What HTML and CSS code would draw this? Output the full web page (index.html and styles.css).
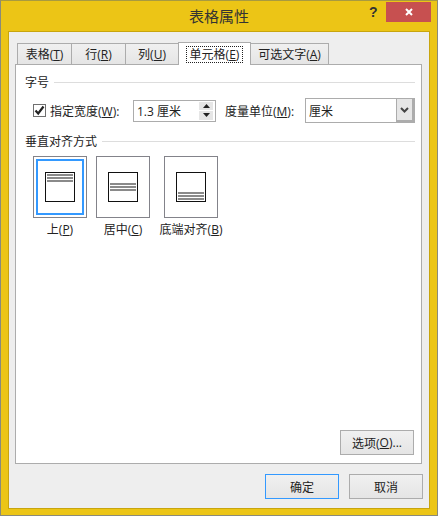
FILE: index.html
```html
<html>

<head>
    <title>表格属性</title>
    <link rel="stylesheet" href="styles.css">
</head>

<body>
    <div class="window">
        <div class="titlebar">
            <div class="title">表格属性</div>
            <div class="help">?</div>
            <div class="close">
                <svg width="10" height="10" viewBox="0 0 10 10">
                    <path d="M2 2 L8 8 M8 2 L2 8" stroke="#fff" stroke-width="2" fill="none" />
                </svg>
            </div>
        </div>
        <div class="client">
            <div class="tabs">
                <div class="tab tab-table">表格(<u>T</u>)</div>
                <div class="tab tab-row">行(<u>R</u>)</div>
                <div class="tab tab-col">列(<u>U</u>)</div>
                <div class="tab tab-active"><span class="focus">单元格(<u>E</u>)</span></div>
                <div class="tab tab-alt">可选文字(<u>A</u>)</div>
            </div>
            <div class="panel">
                <div class="group">
                    <span>字号</span>
                    <div class="rule"></div>
                </div>
                <div class="size-row">
                    <div class="check">
                        <svg width="11" height="11" viewBox="0 0 11 11">
                            <path d="M1.5 5.5 L4.2 8.5 L9.5 1.5" stroke="#222" stroke-width="2.2" fill="none" />
                        </svg>
                    </div>
                    <label class="width-label">指定宽度(<u>W</u>):</label>
                    <div class="spin">
                        <span class="spin-value">1.3 厘米</span>
                        <div class="spin-btns">
                            <div class="spin-btn">
                                <svg width="7" height="4" viewBox="0 0 7 4"><path d="M3.5 0 L7 4 L0 4 Z" fill="#222" /></svg>
                            </div>
                            <div class="spin-btn">
                                <svg width="7" height="4" viewBox="0 0 7 4"><path d="M0 0 L7 0 L3.5 4 Z" fill="#222" /></svg>
                            </div>
                        </div>
                    </div>
                    <label class="unit-label">度量单位(<u>M</u>):</label>
                    <div class="combo">
                        <span class="combo-value">厘米</span>
                        <div class="combo-btn">
                            <svg width="9" height="6" viewBox="0 0 9 6">
                                <path d="M1 1 L4.5 4.5 L8 1" stroke="#444" stroke-width="2" fill="none" />
                            </svg>
                        </div>
                    </div>
                </div>
                <div class="group group-align">
                    <span>垂直对齐方式</span>
                    <div class="rule"></div>
                </div>
                <div class="aligns">
                    <div class="align">
                        <div class="tile tile-selected">
                            <div class="cell cell-top"><i></i><i></i><i></i></div>
                        </div>
                        <div class="align-label">上(<u>P</u>)</div>
                    </div>
                    <div class="align">
                        <div class="tile">
                            <div class="cell cell-mid"><i></i><i></i><i></i></div>
                        </div>
                        <div class="align-label">居中(<u>C</u>)</div>
                    </div>
                    <div class="align">
                        <div class="tile">
                            <div class="cell cell-bottom"><i></i><i></i><i></i></div>
                        </div>
                        <div class="align-label">底端对齐(<u>B</u>)</div>
                    </div>
                </div>
                <div class="options-row">
                    <div class="button">选项(<u>O</u>)...</div>
                </div>
            </div>
            <div class="footer">
                <div class="button button-default">确定</div>
                <div class="button">取消</div>
            </div>
        </div>
    </div>
</body>
</html>
```

FILE: styles.css
```css
html,
body {
    margin: 0;
    padding: 0;
    height: 516px;
    overflow: hidden;
    background: #ffffff;
}

body {
    font-family: "Open Sans", "Noto Sans CJK SC", sans-serif;
    font-size: 12px;
    color: #222;
}

u {
    text-underline-offset: 1px;
}

.window {
    box-sizing: border-box;
    width: 438px;
    height: 516px;
    background: #ecc516;
    border: 1px solid #8a8a7a;
    border-top-color: #a89a40;
    padding: 0 7px 6px 7px;
    display: flex;
    flex-direction: column;
}

.titlebar {
    height: 30px;
    flex: none;
    position: relative;
    display: flex;
    justify-content: center;
    align-items: center;
}

.title {
    font-size: 15px;
    color: #333;
    padding-bottom: 2px;
}

.help {
    position: absolute;
    left: 361px;
    top: 3px;
    font-family: "Liberation Sans", sans-serif;
    font-size: 14px;
    font-weight: bold;
    color: #333;
}

.close {
    position: absolute;
    left: 378px;
    top: 1px;
    width: 45px;
    height: 20px;
    background: #c75050;
    display: flex;
    align-items: center;
    justify-content: center;
}

.client {
    flex: 1;
    background: #eeeeee;
    border: 1px solid #c8a50e;
    padding: 10px 7px 9px 6px;
    display: flex;
    flex-direction: column;
}

.tabs {
    display: flex;
    height: 22px;
    flex: none;
    padding-left: 2px;
    position: relative;
    z-index: 1;
}

.tab {
    box-sizing: border-box;
    height: 22px;
    margin-top: 1px;
    background: linear-gradient(#f0f0f0, #e5e5e5);
    border: 1px solid #acacac;
    border-left-width: 0;
    display: flex;
    align-items: center;
    justify-content: center;
    white-space: nowrap;
}

.tab-table {
    width: 55px;
    border-left-width: 1px;
}

.tab-row {
    width: 54px;
}

.tab-col {
    width: 53px;
}

.tab-active {
    width: 73px;
    height: 23px;
    margin-top: 0;
    margin-left: -1px;
    background: #ffffff;
    border-left-width: 1px;
    border-bottom: 0;
}

.focus {
    outline: 1px dotted #222;
    padding: 0 3px;
    line-height: 15px;
}

.tab-alt {
    width: 78px;
}

.panel {
    box-sizing: border-box;
    height: 400px;
    flex: none;
    background: #ffffff;
    border: 1px solid #acacac;
    padding: 9px 6px 8px 9px;
    display: flex;
    flex-direction: column;
}

.group {
    display: flex;
    align-items: center;
    gap: 5px;
    height: 16px;
    flex: none;
}

.rule {
    flex: 1;
    height: 1px;
    background: #dddddd;
}

.size-row {
    display: flex;
    align-items: center;
    margin-top: 8px;
    height: 25px;
    flex: none;
    padding-left: 8px;
}

.check {
    box-sizing: border-box;
    width: 13px;
    height: 13px;
    border: 1px solid #707070;
    background: #fff;
    display: flex;
    align-items: center;
    justify-content: center;
}

.width-label {
    margin-left: 4px;
    width: 83px;
    white-space: nowrap;
}

.spin {
    box-sizing: border-box;
    width: 83px;
    height: 22px;
    border: 1px solid #acacac;
    display: flex;
    align-items: center;
    justify-content: space-between;
}

.spin-value {
    padding-left: 3px;
}

.spin-btns {
    width: 14px;
    height: 18px;
    margin-right: 2px;
    display: flex;
    flex-direction: column;
    gap: 1px;
}

.spin-btn {
    flex: 1;
    background: #e6e6e6;
    display: flex;
    align-items: center;
    justify-content: center;
}

.unit-label {
    margin-left: 9px;
    width: 80px;
    white-space: nowrap;
}

.combo {
    box-sizing: border-box;
    width: 110px;
    height: 25px;
    border: 1px solid #acacac;
    display: flex;
    align-items: center;
    justify-content: space-between;
}

.combo-value {
    padding-left: 3px;
}

.combo-btn {
    box-sizing: border-box;
    width: 18px;
    height: 23px;
    background: #e6e6e6;
    border-left: 1px solid #acacac;
    border-right: 2px solid #acacac;
    border-bottom: 2px solid #acacac;
    display: flex;
    align-items: center;
    justify-content: center;
}

.group-align {
    margin-top: 10px;
}

.aligns {
    display: flex;
    gap: 9px;
    margin-top: 7px;
    padding-left: 8px;
    flex: none;
}

.align {
    width: 54px;
    display: flex;
    flex-direction: column;
    align-items: center;
}

.align + .align + .align {
    margin-left: 5px;
}

.tile {
    box-sizing: border-box;
    width: 54px;
    height: 62px;
    border: 1px solid #83838a;
    display: flex;
    align-items: center;
    justify-content: center;
}

.tile-selected {
    box-shadow: inset 0 0 0 2px #ffffff, inset 0 0 0 4px #3399ff;
}

.cell {
    box-sizing: border-box;
    width: 30px;
    height: 30px;
    border: 1px solid #111;
    padding: 1px;
    display: flex;
    flex-direction: column;
    gap: 1px;
}

.cell i {
    display: block;
    height: 2px;
    background: #8a8a8a;
}

.cell-mid {
    justify-content: center;
}

.cell-bottom {
    justify-content: flex-end;
}

.align-label {
    margin-top: 3px;
    line-height: 18px;
    white-space: nowrap;
}

.options-row {
    margin-top: auto;
    margin-right: 1px;
    display: flex;
    justify-content: flex-end;
}

.button {
    box-sizing: border-box;
    width: 74px;
    height: 25px;
    background: linear-gradient(#f0f0f0, #e5e5e5);
    border: 1px solid #acacac;
    display: flex;
    align-items: center;
    justify-content: center;
    white-space: nowrap;
}

.button-default {
    border-color: #3399ff;
}

.footer {
    margin-top: auto;
    margin-right: -1px;
    display: flex;
    justify-content: flex-end;
    gap: 10px;
}
```
